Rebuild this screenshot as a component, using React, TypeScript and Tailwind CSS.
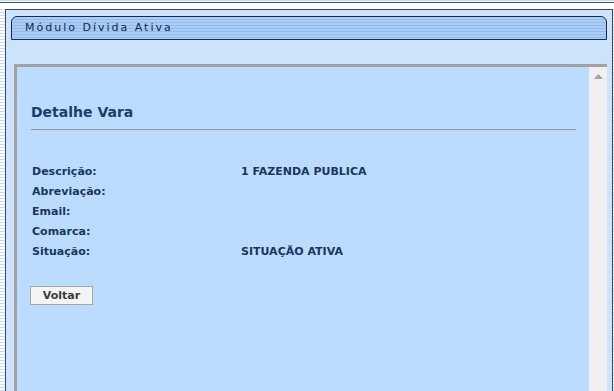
import React from 'react'

interface Field {
  label: string
  value?: string
}

const fields: Field[] = [
  { label: 'Descrição:', value: '1 FAZENDA PUBLICA' },
  { label: 'Abreviação:' },
  { label: 'Email:' },
  { label: 'Comarca:' },
  { label: 'Situação:', value: 'SITUAÇÃO ATIVA' },
]

const font = { fontFamily: '"DejaVu Sans", Verdana, sans-serif' }

const App: React.FC = () => {
  return (
    <div
      className="w-[614px] h-[391px] overflow-hidden bg-[repeating-linear-gradient(180deg,#c4dcf6_0px,#c4dcf6_1px,#ffffff_1px,#ffffff_3px)]"
      style={font}
    >
      <div className="h-[2px]" />
      <div className="h-px bg-[#3c5478]" />
      <div className="h-[6px] bg-white" />
      <div className="ml-[5px] mr-px h-[382px] border-l border-t border-r border-[#34496c] bg-[#cde3fb] pt-[6px]">
        {/* module tab */}
        <div className="ml-[5px] mr-[5px] h-[24px] flex items-center pl-[13px] border border-[#1b2b48] rounded-tl-[6px] rounded-tr-[6px] bg-[repeating-linear-gradient(180deg,#a9cdf5_0px,#a9cdf5_2px,#92bcee_2px,#92bcee_3px)]">
          <span className="text-[11px] tracking-[2px] text-[#17264a]">Módulo Dívida Ativa</span>
        </div>

        {/* detail panel */}
        <div className="ml-[8px] mr-[5px] mt-[24px] h-[330px] flex border-t-[3px] border-l-[3px] border-[#a2a2a2] bg-[#bbdcfe]">
          <div className="flex-1 pl-[14px] pr-[13px] pt-[35px]">
            <h1 className="text-[14px] font-bold text-[#1c3d6c] leading-[20px]">Detalhe Vara</h1>
            <div className="mt-[7px] h-[2px] bg-[#8c9cb0] border-b border-[#c8d4e4]" />
            <div className="mt-[31px] flex flex-col">
              {fields.map((f) => (
                <div key={f.label} className="flex h-[20px] items-center pl-px text-[11px] font-bold text-[#1a3563]">
                  <span className="w-[209px]">{f.label}</span>
                  <span>{f.value ?? ''}</span>
                </div>
              ))}
            </div>
            <button className="mt-[24px] -ml-px w-[63px] h-[19px] border border-[#a6a6a6] bg-[#f4f4f4] text-[11px] font-bold text-[#3a3a3a] leading-none">
              Voltar
            </button>
          </div>
          <div className="w-[18px] bg-[#f0f0f0] flex justify-center pt-[7px]">
            <svg width="9" height="5" viewBox="0 0 9 5">
              <path d="M4.5 0 L9 5 L0 5 Z" fill="#a3a3a3" />
            </svg>
          </div>
        </div>
      </div>
    </div>
  )
}

export default App
